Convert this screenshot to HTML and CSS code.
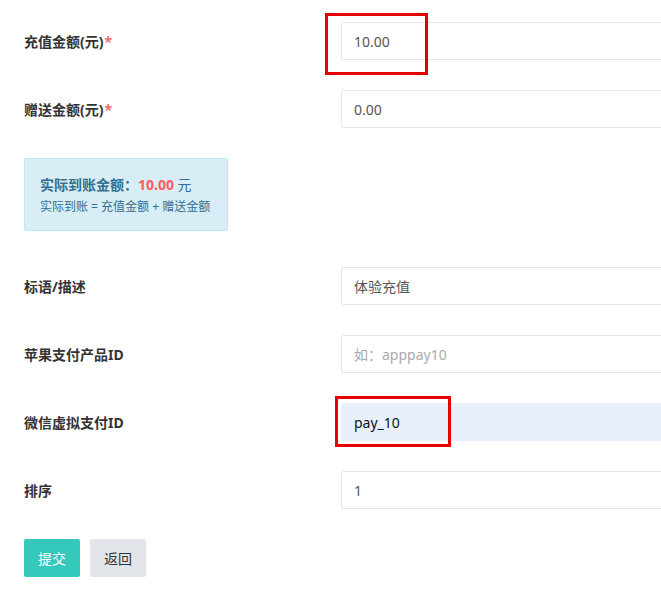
FILE: index.html
```html
<!DOCTYPE html>
<html lang="zh-CN">
<head>
<meta charset="utf-8">
<title>充值套餐</title>
<link rel="stylesheet" href="styles.css">
</head>
<body>
<form class="form">
  <div class="row">
    <label class="label">充值金额(元)<span class="req">*</span></label>
    <div class="field"><input class="input" type="text" value="10.00"></div>
  </div>
  <div class="row">
    <label class="label">赠送金额(元)<span class="req">*</span></label>
    <div class="field"><input class="input" type="text" value="0.00"></div>
  </div>
  <div class="notice">
    <div class="notice-main">实际到账金额：<span class="amount">10.00</span> <span class="unit">元</span></div>
    <div class="notice-sub">实际到账 = 充值金额 + 赠送金额</div>
  </div>
  <div class="row">
    <label class="label">标语/描述</label>
    <div class="field"><input class="input" type="text" value="体验充值"></div>
  </div>
  <div class="row">
    <label class="label">苹果支付产品ID</label>
    <div class="field"><input class="input" type="text" placeholder="如：apppay10"></div>
  </div>
  <div class="row">
    <label class="label">微信虚拟支付ID</label>
    <div class="field"><input class="input input-filled" type="text" value="pay_10"></div>
  </div>
  <div class="row">
    <label class="label">排序</label>
    <div class="field"><input class="input" type="text" value="1"></div>
  </div>
  <div class="actions">
    <button type="button" class="btn btn-primary">提交</button>
    <button type="button" class="btn btn-default">返回</button>
  </div>
</form>
<div class="mark mark-1"></div>
<div class="mark mark-2"></div>
</body>
</html>
```
FILE: styles.css
```css
html, body {
  margin: 0;
  padding: 0;
  overflow: hidden;
  background: #fff;
}
body {
  font-family: "Noto Sans", "Noto Sans CJK SC", sans-serif;
  font-size: 14px;
  color: #333;
  position: relative;
  width: 661px;
  height: 598px;
}
.form {
  box-sizing: border-box;
  padding: 22px 0 0 24px;
  width: 661px;
}
.row {
  display: grid;
  grid-template-columns: 317px 320px;
  align-items: center;
  height: 38px;
  margin-bottom: 30px;
}
.label {
  font-weight: bold;
  color: #333;
  font-size: 14px;
}
.req {
  color: #f56c6c;
  margin-left: 1px;
}
.field {
  overflow: hidden;
  height: 38px;
}
.input {
  box-sizing: border-box;
  width: calc(100% + 20px);
  height: 38px;
  border: 1px solid #e6e6e6;
  border-radius: 2px;
  padding: 0 12px;
  font-family: "Noto Sans", "Noto Sans CJK SC", sans-serif;
  font-size: 14px;
  color: #555;
  background: #fff;
  outline: none;
  display: block;
}
.input::placeholder {
  color: #aaa;
}
.input-filled {
  background: #e8f0fe;
  border-color: #e8f0fe;
  color: #111;
}
.notice {
  box-sizing: border-box;
  width: 204px;
  height: 73px;
  margin-bottom: 36px;
  padding: 16px 15px 0 15px;
  background: #d9edf7;
  border: 1px solid #bce8f1;
  border-radius: 2px;
  color: #31708f;
}
.notice-main {
  font-weight: bold;
  font-size: 14px;
  line-height: 20px;
}
.notice-main .amount {
  color: #ff5b5b;
}
.notice-main .unit {
  font-weight: normal;
}
.notice-sub {
  font-size: 12px;
  line-height: 18px;
  margin-top: 3px;
}
.actions {
  display: flex;
  gap: 10px;
}
.btn {
  box-sizing: border-box;
  width: 56px;
  height: 38px;
  border: none;
  border-radius: 2px;
  font-family: "Noto Sans", "Noto Sans CJK SC", sans-serif;
  font-size: 14px;
  padding: 0;
  cursor: pointer;
}
.btn-primary {
  background: #34c9ba;
  color: #fff;
}
.btn-default {
  background: #e2e5e9;
  color: #333;
}
.mark {
  position: absolute;
  border: 3px solid #e60000;
  box-sizing: border-box;
}
.mark-1 {
  left: 325px;
  top: 13px;
  width: 103px;
  height: 62px;
}
.mark-2 {
  left: 335px;
  top: 396px;
  width: 116px;
  height: 51px;
}
```
